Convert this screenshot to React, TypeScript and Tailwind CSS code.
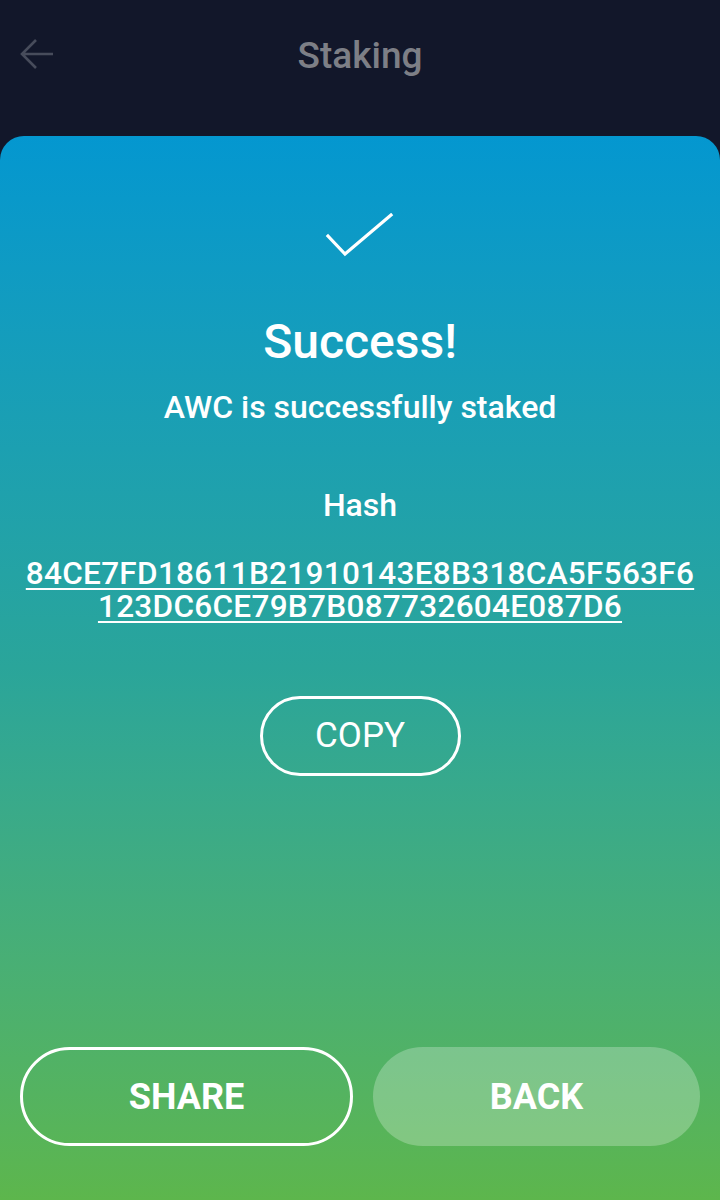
const hash = ["84CE7FD18611B21910143E8B318CA5F563F6", "123DC6CE79B7B087732604E087D6"];

export default function App() {
  return (
    <div className="flex h-[1200px] w-[720px] flex-col bg-[#12172a] font-['Roboto',sans-serif] text-white">
      <header className="relative flex h-[136px] shrink-0 items-start justify-center pt-[34px]">
        {/* back arrow */}
        <svg className="absolute left-[19px] top-[38px]" width="36" height="32" viewBox="0 0 36 32" fill="none">
          <path d="M17 2 L3 16 L17 30 M3 16 H34" stroke="#474c5b" strokeWidth="2.6" />
        </svg>
        <h1 className="text-[37px] font-medium leading-[44px] text-[#7d7f86]">Staking</h1>
      </header>

      <main className="flex flex-1 flex-col items-center rounded-t-[24px] bg-gradient-to-b from-[#0497d0] via-[#2aa59a] to-[#5db64c] px-5 pb-[54px]">
        <svg className="mt-[77px]" width="70" height="46" viewBox="0 0 70 46" fill="none">
          <path d="M3 23 L20 41 L66 2" stroke="white" strokeWidth="3.2" strokeLinecap="square" />
        </svg>

        <h2 className="mt-[55px] text-[48px] font-medium leading-[56px]">Success!</h2>
        <p className="mt-[17px] text-[32px] font-medium leading-[40px]">AWC is successfully staked</p>

        <p className="mt-[58px] text-[32px] font-medium leading-[40px]">Hash</p>
        <div className="mt-[32px] flex flex-col items-center text-[31.5px] font-medium leading-[33px] tracking-[0.3px] underline decoration-2 underline-offset-[4px]">
          {hash.map((line) => (
            <span key={line}>{line}</span>
          ))}
        </div>

        <button className="mt-[73px] flex h-[80px] w-[201px] items-center justify-center rounded-full border-[3px] border-white text-[35px] font-normal">
          COPY
        </button>

        <div className="mt-auto flex w-full gap-[20px]">
          <button className="flex h-[99px] flex-1 items-center justify-center rounded-full border-[3px] border-white text-[36px] font-bold">
            SHARE
          </button>
          <button className="flex h-[99px] flex-1 items-center justify-center rounded-full bg-white/25 text-[36px] font-bold">
            BACK
          </button>
        </div>
      </main>
    </div>
  );
}
